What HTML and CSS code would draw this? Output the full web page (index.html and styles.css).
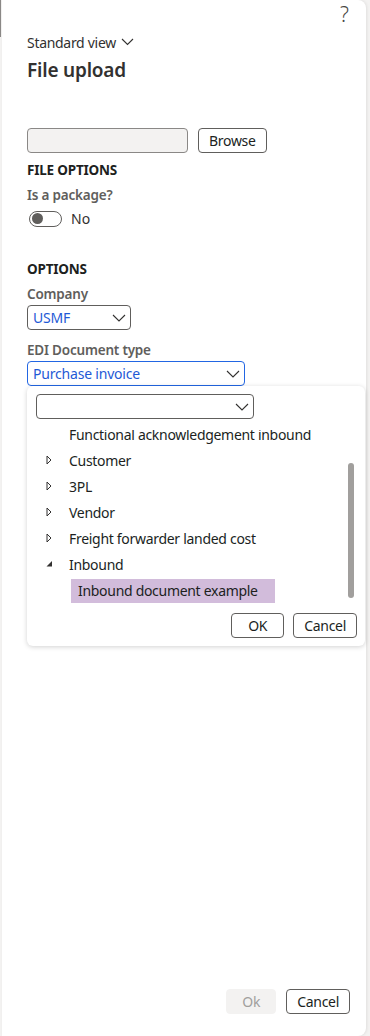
FILE: index.html
```html
<!DOCTYPE html>
<html lang="en">
<head>
  <meta charset="UTF-8" />
  <meta name="viewport" content="width=device-width, initial-scale=1.0"/>
  <title>File upload</title>
  <link rel="stylesheet" href="styles.css">
</head>
<body>

  <div class="panel">
    <div class="help-row">
      <span class="help">?</span>
    </div>

    <div class="view-picker">
      Standard view
      <svg class="chev" width="13" height="8" viewBox="0 0 13 8"><polyline points="1,1 6.5,6.5 12,1" fill="none" stroke="#323130" stroke-width="1.1"/></svg>
    </div>
    <h1 class="title">File upload</h1>

    <div class="upload-row">
      <div class="file-box"></div>
      <button class="btn">Browse</button>
    </div>

    <div class="section-title">FILE OPTIONS</div>
    <div class="field-label">Is a package?</div>
    <div class="toggle-row">
      <span class="toggle"><span class="knob"></span></span>
      <span>No</span>
    </div>

    <div class="section-title options">OPTIONS</div>
    <div class="field-label">Company</div>
    <div class="select company">
      <span>USMF</span>
      <svg width="14" height="8" viewBox="0 0 14 8"><polyline points="1,1 7,7 13,1" fill="none" stroke="#323130" stroke-width="1.1"/></svg>
    </div>

    <div class="field-label spaced">EDI Document type</div>
    <div class="lookup">
      <div class="select doc-type">
        <span>Purchase invoice</span>
        <svg width="14" height="8" viewBox="0 0 14 8"><polyline points="1,1 7,7 13,1" fill="none" stroke="#323130" stroke-width="1.1"/></svg>
      </div>

      <!-- Open lookup dropdown -->
      <div class="popup">
        <div class="select filter">
          <span></span>
          <svg width="14" height="8" viewBox="0 0 14 8"><polyline points="1,1 7,7 13,1" fill="none" stroke="#323130" stroke-width="1.1"/></svg>
        </div>
        <div class="tree-wrap">
          <ul class="tree">
            <li class="node"><span class="exp"></span>Functional acknowledgement inbound</li>
            <li class="node"><span class="exp"><svg width="6" height="10" viewBox="0 0 6 10"><polygon points="1,1 5,5 1,9" fill="none" stroke="#323130" stroke-width="1"/></svg></span>Customer</li>
            <li class="node"><span class="exp"><svg width="6" height="10" viewBox="0 0 6 10"><polygon points="1,1 5,5 1,9" fill="none" stroke="#323130" stroke-width="1"/></svg></span>3PL</li>
            <li class="node"><span class="exp"><svg width="6" height="10" viewBox="0 0 6 10"><polygon points="1,1 5,5 1,9" fill="none" stroke="#323130" stroke-width="1"/></svg></span>Vendor</li>
            <li class="node"><span class="exp"><svg width="6" height="10" viewBox="0 0 6 10"><polygon points="1,1 5,5 1,9" fill="none" stroke="#323130" stroke-width="1"/></svg></span>Freight forwarder landed cost</li>
            <li class="node"><span class="exp"><svg width="7" height="10" viewBox="0 0 7 10"><polygon points="0.5,7.5 6,2 6,7.5" fill="#323130"/></svg></span>Inbound</li>
            <li class="node child"><span class="selected">Inbound document example</span></li>
          </ul>
          <div class="scrollbar"></div>
        </div>
        <div class="popup-actions">
          <button class="btn ok">OK</button>
          <button class="btn">Cancel</button>
        </div>
      </div>
    </div>

    <div class="footer">
      <button class="btn disabled">Ok</button>
      <button class="btn">Cancel</button>
    </div>
  </div>

</body>
</html>
```

FILE: styles.css
```css
html, body {
  height: 100%;
  margin: 0;
  padding: 0;
}

body {
  font-family: "Noto Sans", "Open Sans", sans-serif;
  font-size: 14px;
  color: #323130;
  background: #f3f2f1 linear-gradient(#8a8886, #8a8886) 0 0 / 1px 37px no-repeat;
  padding-left: 2px;
  box-sizing: border-box;
}

.panel {
  display: flex;
  flex-direction: column;
  width: 364px;
  height: 100%;
  box-sizing: border-box;
  padding: 0 16px 22px 25px;
  background: white;
  border-radius: 0 8px 8px 0;
  box-shadow: 1px 0 3px rgba(0, 0, 0, 0.08);
}

.help-row {
  display: flex;
  justify-content: flex-end;
  height: 28px;
  margin-right: 1px;
}

.help {
  font-size: 21px;
  font-weight: 300;
  line-height: 28px;
  color: #484644;
}

.view-picker {
  display: flex;
  align-items: center;
  gap: 5px;
  height: 20px;
  margin-top: 4px;
  font-size: 14px;
  letter-spacing: -0.3px;
}

.title {
  margin: 4px 0 0;
  font-size: 19px;
  font-weight: 600;
  line-height: 28px;
  letter-spacing: -0.2px;
}

.upload-row {
  display: flex;
  gap: 10px;
  margin-top: 44px;
}

.file-box {
  width: 161px;
  height: 25px;
  box-sizing: border-box;
  background: #f3f2f1;
  border: 1px solid #8a8886;
  border-radius: 4px;
}

.btn {
  height: 25px;
  padding: 0 10px;
  font-family: inherit;
  font-size: 14px;
  letter-spacing: -0.3px;
  color: #201f1e;
  background: white;
  border: 1px solid #605e5c;
  border-radius: 4px;
}

.section-title {
  margin-top: 7px;
  font-size: 13.5px;
  font-weight: 700;
  line-height: 20px;
  letter-spacing: -0.2px;
  color: #201f1e;
}

.section-title.options {
  margin-top: 28px;
}

.field-label {
  margin-top: 6px;
  font-size: 13.5px;
  font-weight: 600;
  line-height: 19px;
  letter-spacing: -0.2px;
  color: #605e5c;
}

.field-label.spaced {
  margin-top: 11px;
}

.toggle-row {
  display: flex;
  align-items: center;
  gap: 9px;
  height: 25px;
  margin-top: 1px;
  margin-left: 2px;
}

.toggle {
  display: flex;
  align-items: center;
  width: 33px;
  height: 16px;
  box-sizing: border-box;
  padding: 0 2px;
  border: 1px solid #605e5c;
  border-radius: 8px;
}

.knob {
  width: 11px;
  height: 11px;
  border-radius: 50%;
  background: #605e5c;
}

.select {
  display: flex;
  align-items: center;
  justify-content: space-between;
  height: 25px;
  margin-top: 1px;
  box-sizing: border-box;
  padding: 0 4px 0 5px;
  border: 1px solid #605e5c;
  border-radius: 4px;
  color: #1f5ad6;
  letter-spacing: -0.2px;
}

.select.company {
  width: 104px;
}

.lookup {
  position: relative;
}

.select.doc-type {
  width: 218px;
  border-color: #2266e3;
}

.popup {
  position: absolute;
  top: 26px;
  left: 0;
  width: 338px;
  box-sizing: border-box;
  padding: 8px 8px 8px 9px;
  background: white;
  border-radius: 6px;
  box-shadow: 0 1px 5px rgba(0, 0, 0, 0.18);
  z-index: 1;
}

.select.filter {
  width: 218px;
  margin-top: 0;
}

.tree-wrap {
  display: flex;
  justify-content: space-between;
  height: 173px;
  margin-top: 11px;
  overflow: hidden;
}

.tree {
  margin: -9px 0 0;
  padding: 0;
  list-style: none;
}

.node {
  display: flex;
  align-items: center;
  height: 26px;
  font-size: 14px;
  letter-spacing: -0.3px;
  color: #201f1e;
}

.exp {
  display: flex;
  align-items: center;
  width: 33px;
  padding-left: 10px;
  box-sizing: border-box;
}

.node.child {
  padding-left: 35px;
  height: 27px;
}

.selected {
  padding: 2px 17px 3px 7px;
  background: #d2bcdb;
}

.scrollbar {
  align-self: flex-end;
  width: 6px;
  height: 135px;
  margin-right: 3px;
  margin-bottom: 5px;
  border-radius: 3px;
  background: #a19f9d;
}

.popup-actions {
  display: flex;
  justify-content: flex-end;
  gap: 9px;
  margin-top: 10px;
}

.popup-actions .ok {
  width: 53px;
}

.footer {
  display: flex;
  justify-content: flex-end;
  gap: 10px;
  margin-top: auto;
}

.btn.disabled {
  width: 50px;
  color: #a19f9d;
  background: #f3f2f1;
  border-color: #f3f2f1;
}
```
